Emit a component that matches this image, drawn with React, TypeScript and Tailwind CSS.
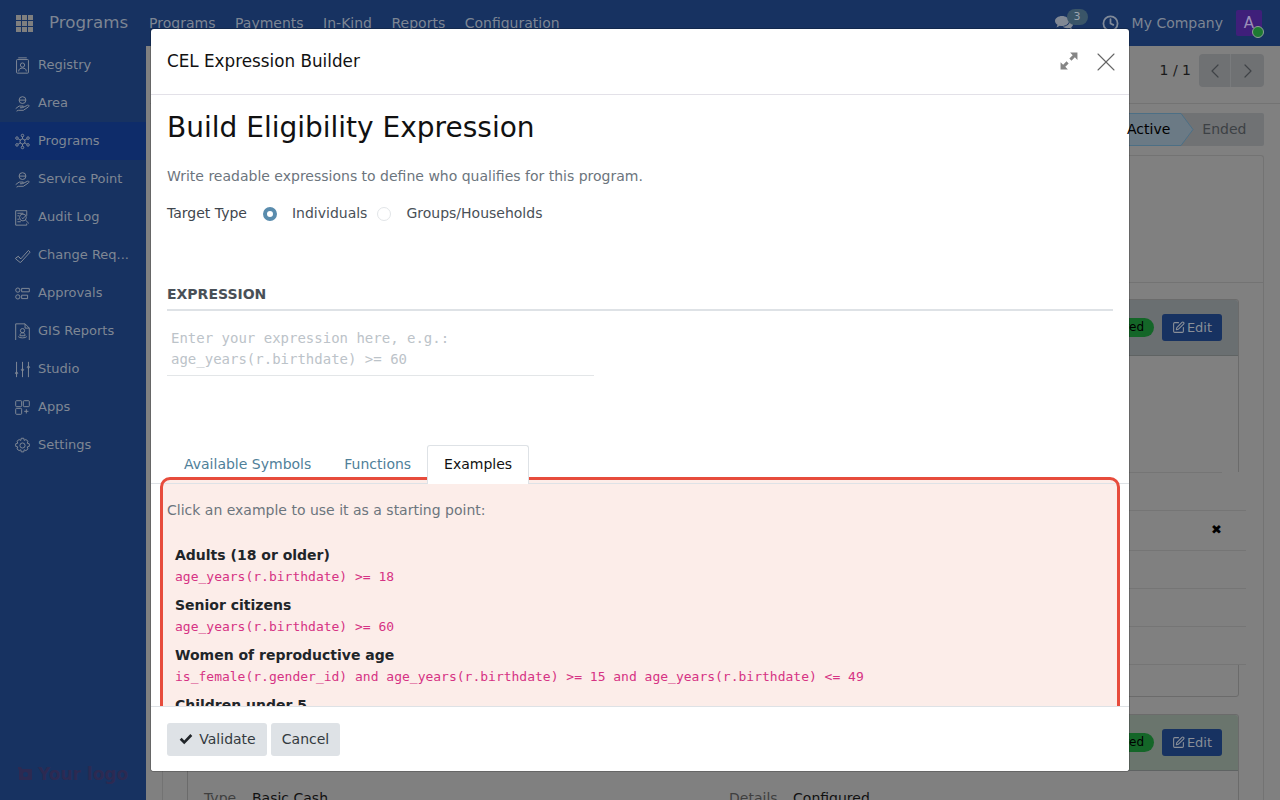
import { ChevronLeft, ChevronRight, Clock, SquarePen, X } from 'lucide-react';

const sans = "font-['DejaVu_Sans',sans-serif]";
const mono = "font-['DejaVu_Sans_Mono',monospace]";

// sidebar icons drawn by hand, the originals are custom line icons
const sideIcons: Record<string, React.ReactNode> = {
  Registry: (
    <>
      <rect x="3" y="3" width="14" height="16" rx="1" />
      <path d="M5 1h10M10 7a2.500 2.500 0 1 1 0 5 2.500 2.500 0 0 1 0-5zM5.500 17c0-3 2-4 4.500-4s4.500 1 4.500 4" />
    </>
  ),
  Area: (
    <>
      <circle cx="10" cy="6" r="4" />
      <path d="M6 6h8M2 16l4-3h5l-1.500 2H7m3 0 6-3c2-.5 2 1 1 2l-6 4H5l-2 1" />
    </>
  ),
  Programs: (
    <>
      <circle cx="10" cy="10" r="3" />
      <circle cx="10" cy="3" r="1.500" />
      <circle cx="10" cy="17" r="1.500" />
      <circle cx="3.500" cy="6" r="1.500" />
      <circle cx="16.500" cy="6" r="1.500" />
      <circle cx="3.500" cy="14" r="1.500" />
      <circle cx="16.500" cy="14" r="1.500" />
      <path d="M10 4.500V7M10 13v2.500M5 7l2.500 1.500M15 7l-2.500 1.500M5 13l2.500-1.500M15 13l-2.500-1.500" />
    </>
  ),
  'Service Point': (
    <>
      <circle cx="10" cy="6" r="4" />
      <path d="M6 6h8M2 16l4-3h5l-1.500 2H7m3 0 6-3c2-.5 2 1 1 2l-6 4H5l-2 1" />
    </>
  ),
  'Audit Log': (
    <>
      <path d="M15 8V2H2v17h13v-2" />
      <circle cx="10.500" cy="10" r="4" />
      <path d="m9 10 1.500 1.500L13 8.500M13.500 13l4 4M4 5h7M4 8h2M4 12h2M4 15h4" />
    </>
  ),
  'Change Req...': <path d="m2 13 3-2 3 3 9-10 2 2L8 18l-1 0-5-4zM5 11l3 3" />,
  Approvals: (
    <>
      <circle cx="4.500" cy="6" r="2.500" />
      <circle cx="4.500" cy="14" r="2.500" />
      <path d="M9 4h9v4H9zM9 12h7v4H9z" />
    </>
  ),
  'GIS Reports': (
    <>
      <path d="M2 1h11l5 5v15H2zM13 1v5h5" />
      <circle cx="10" cy="9" r="2.500" />
      <path d="M7 15c0-2 1-3.500 3-3.500s3 1.500 3 3.500zM5 16c1 2 9 2 10 0" />
    </>
  ),
  Studio: (
    <path d="M3 1v18M10 1v18M17 1v18M3 13a1.300 1.300 0 1 0 .01 0M10 9a1.300 1.300 0 1 0 .01 0M17 6a1.300 1.300 0 1 0 .01 0" />
  ),
  Apps: (
    <>
      <rect x="2" y="2" width="7" height="7" rx="1" />
      <rect x="11" y="2" width="7" height="7" rx="1" />
      <rect x="2" y="11" width="7" height="7" rx="1" />
      <path d="M14.500 12v5M12 14.500h5" />
    </>
  ),
  Settings: (
    <>
      <circle cx="10" cy="10" r="3" />
      <path d="M8.500 1.500h3l.5 2.500 2-1 2.500 2-1 2.300 2.500.700v3l-2.500.700 1 2.300-2.500 2-2-1-.5 2.500h-3l-.5-2.500-2 1-2.500-2 1-2.300-2.500-.700v-3l2.500-.700-1-2.300 2.500-2 2 1z" />
    </>
  ),
};

const sideItems = ['Registry', 'Area', 'Programs', 'Service Point', 'Audit Log', 'Change Req...', 'Approvals', 'GIS Reports', 'Studio', 'Apps', 'Settings'];
const topMenu = ['Programs', 'Payments', 'In-Kind', 'Reports', 'Configuration'];

const examples = [
  { title: 'Adults (18 or older)', code: 'age_years(r.birthdate) >= 18' },
  { title: 'Senior citizens', code: 'age_years(r.birthdate) >= 60' },
  { title: 'Women of reproductive age', code: 'is_female(r.gender_id) and age_years(r.birthdate) >= 15 and age_years(r.birthdate) <= 49' },
  { title: 'Children under 5', code: 'age_years(r.birthdate) < 5' },
];

function Sidebar() {
  return (
    <aside className="w-[146px] shrink-0 bg-[#173261] flex flex-col">
      {sideItems.map((item) => (
        <div key={item} className={`h-[38px] flex items-center pl-[14px] gap-[7px] text-[13px] text-[#7f8794] ${item === 'Programs' ? 'bg-[#0e2c6a]' : ''}`}>
          <svg viewBox="0 0 20 20" fill="none" stroke="#858c98" strokeWidth="1.100" className="w-[17px] h-[17px] shrink-0">
            {sideIcons[item]}
          </svg>
          <span className="whitespace-nowrap">{item}</span>
        </div>
      ))}
      <div className="mt-auto pb-[15px] pl-[17px] flex items-center gap-[5px] text-[#2c2a52] font-bold text-[17px] leading-[22px]">
        <svg viewBox="0 0 16 16" className="w-[16px] h-[16px]" fill="#2c2a52">
          <path d="M1 1h3l1 2h9a1 1 0 0 1 1 1v9a1 1 0 0 1-1 1H3a1 1 0 0 1-1-1V4L1 3zM8.500 6a2.500 2.500 0 1 0 0 5 2.500 2.500 0 0 0 0-5z" />
        </svg>
        <span>Your logo</span>
      </div>
    </aside>
  );
}

function TopBar() {
  return (
    <header className="h-[46px] bg-[#173261] flex items-center text-[#7d8593] shrink-0">
      <div className="ml-[16px] grid grid-cols-3 gap-[1px] w-[17px] h-[17px]">
        {Array.from({ length: 9 }).map((_, i) => (
          <span key={i} className="bg-[#7f7f7f]" />
        ))}
      </div>
      <span className="ml-[16px] text-[16.700px] text-[#7d8593]">Programs</span>
      <nav className="ml-[21px] flex gap-[19.500px] text-[14px]">
        {topMenu.map((m) => (
          <span key={m}>{m}</span>
        ))}
      </nav>
      <div className="ml-auto flex items-center">
        <div className="relative w-[35px] h-[20px] mr-[12px]">
          <svg viewBox="0 0 18 15" className="absolute left-0 top-[3px] w-[18px] h-[15px]" fill="#808894">
            <path d="M7 0c3.800 0 7 2.200 7 5s-3.200 5-7 5c-.8 0-1.500-.1-2.200-.3L1.500 11.500 2.500 8.700C.9 7.800 0 6.500 0 5c0-2.800 3.200-5 7-5z" />
            <path d="M15 4.500c1.800.8 3 2.100 3 3.700 0 1.200-.7 2.300-1.800 3l.8 2.300-2.900-1.500c-.6.2-1.300.2-2 .2-1.800 0-3.400-.6-4.300-1.600 3.800 0 7.200-2.500 7.200-6.100z" />
          </svg>
          <span className="absolute left-[12px] top-[-4px] h-[16px] w-[21px] rounded-full bg-[#3a5568] text-[11px] leading-[16px] text-center text-[#9aa3ad]">3</span>
        </div>
        <Clock size={17} strokeWidth={2.500} className="text-[#808a99] mr-[13px]" />
        <span className="text-[14px] mr-[13px]">My Company</span>
        <div className="relative w-[26px] h-[26px] mr-[18px] rounded-[2px] bg-[#3f1f7a] text-[#9a8fb8] text-[15px] flex items-center justify-center">
          A
          <span className="absolute right-[-2px] bottom-[-2px] w-[12px] h-[12px] rounded-full bg-[#1e7a32] border border-[#8fa098]" />
        </div>
      </div>
    </header>
  );
}

function CardHeader({ bg }: { bg: string }) {
  return (
    <div className={`h-[56px] ${bg} border-b border-[#5f6363] flex items-center justify-end gap-[8px] pr-[16px] rounded-t-[3px]`}>
      <span className="h-[19px] rounded-full bg-[#146628] pl-[20px] pr-[10px] text-[12px] leading-[19px] text-black">Configured</span>
      <span className="w-[60px] h-[27px] rounded-[3px] bg-[#173261] text-[#8a8f98] text-[13px] flex items-center justify-center gap-[2px]">
        <SquarePen size={13} />
        Edit
      </span>
    </div>
  );
}

function Background() {
  return (
    <main className="flex-1 min-w-0 bg-[#808080] border-l-[4px] border-[#808080] overflow-hidden flex flex-col text-[#111]">
      <div className="h-[58px] border-b border-[#737373] flex items-start justify-end pt-[8px] pr-[16px] shrink-0">
        <span className="text-[14px] leading-[33px] mr-[8px] text-[#1a1a1a]">1 / 1</span>
        <div className="flex h-[33px] bg-[#6f7173] rounded-[4px] text-[#3f4347]">
          <span className="w-[32px] flex items-center justify-center border-r border-[#797b7d]"><ChevronLeft size={24} strokeWidth={1.200} /></span>
          <span className="w-[33px] flex items-center justify-center"><ChevronRight size={24} strokeWidth={1.200} /></span>
        </div>
      </div>
      <div className="flex justify-end mt-[9px] pr-[16px] shrink-0">
        <div className="relative h-[33px] w-[137px] bg-[#707274] rounded-r-[2px] text-[14px] flex items-center">
          <span className="absolute left-0 top-0 w-[53px] h-[33px] bg-[#6b7a85] border-y border-[#4c6f85]" />
          <svg viewBox="0 0 14 33" className="absolute left-[53px] top-0 w-[14px] h-[33px]">
            <path d="M0 .5h1L13 16.500 1 32.500H0" fill="#6b7a85" stroke="#4c6f85" />
          </svg>
          <span className="text-black relative z-10">Active</span>
          <span className="ml-[32px] text-[#3d4145]">Ended</span>
        </div>
      </div>
      <div className="relative ml-[12px] mr-[16px] mt-[9px] flex-1 border border-b-0 border-[#737373] rounded-t-[3px] pl-[24px] pr-[24px] pt-[143px]">
        <div className="absolute left-0 right-0 top-[126px] h-[1px] bg-[#737373]" />
        <div className="border border-[#6b6b6b] rounded-[3px]">
          <CardHeader bg="bg-[#6a6f71]" />
          <div className="h-[340px] relative">
            {/* table rows behind the modal */}
            <div className="absolute left-0 right-[-9px] top-[116px] h-[193px] bg-[#808080]" />
            <div className="absolute left-0 right-[16px] top-[116px] h-[1px] bg-[#757575]" />
            <div className="absolute left-0 right-[-8px] top-[154px] h-[1px] bg-[#757575]" />
            <div className="absolute left-0 right-[-8px] top-[194px] h-[1px] bg-[#757575]" />
            <div className="absolute left-0 right-[-8px] top-[232px] h-[1px] bg-[#757575]" />
            <div className="absolute left-0 right-[-8px] top-[270px] h-[1px] bg-[#757575]" />
            <div className="absolute left-0 right-[-8px] top-[308px] h-[1px] bg-[#757575]" />
            <span className="absolute right-[16px] top-[167px] text-[13px] font-bold text-black leading-[14px]">✖</span>
          </div>
        </div>
        <div className="mt-[17px] border border-[#6b6b6b] rounded-t-[3px] h-[200px]">
          <CardHeader bg="bg-[#6a756d]" />
          <div className="pl-[16px] pt-[17px] flex text-[14px] leading-[20px]">
            <span className="w-[48px] text-[#3f3f3f]">Type</span>
            <span className="text-[#111]">Basic Cash</span>
            <span className="ml-[401px] w-[64px] text-[#3f3f3f]">Details</span>
            <span className="text-[#111]">Configured</span>
          </div>
        </div>
      </div>
    </main>
  );
}

function Modal() {
  return (
    <div className={`absolute left-[151px] top-[29px] w-[978px] h-[742px] bg-white rounded-[3px] shadow-[0_0_0_1px_rgba(0,0,0,0.2)] flex flex-col overflow-hidden ${sans}`}>
      <div className="h-[66px] shrink-0 border-b border-[#e3e1e8] flex items-center pl-[16px] pr-[7px]">
        <h2 className="text-[16.800px] text-[#111] mt-[1px]">CEL Expression Builder</h2>
        <svg viewBox="0 0 16 16" className="ml-auto w-[18px] h-[18px] mr-[12px] mt-[-1px]" fill="#858585">
          <path d="M9 0.500h6.500V7l-2.300-2.300-3 3-1.900-1.900 3-3zM7 15.500H.5V9l2.300 2.300 3-3 1.900 1.900-3 3z" />
        </svg>
        <X size={32} strokeWidth={0.800} className="text-[#666] mt-[1px]" />
      </div>

      <div className="flex-1 min-h-0 overflow-hidden relative">
        <div className="px-[16px] pt-[16px]">
          <h1 className="text-[28px] leading-[34px] text-[#111]">Build Eligibility Expression</h1>
          <p className="mt-[21px] text-[14px] leading-[21px] text-[#6c757d]">Write readable expressions to define who qualifies for this program.</p>
          <div className="mt-[16px] flex items-center text-[14px] leading-[21px] text-[#495057]">
            <span className="text-[#3f464d]">Target Type</span>
            <span className="ml-[16px] w-[14px] h-[14px] rounded-full border-[4px] border-[#5a8cad] bg-white" />
            <span className="ml-[15px]">Individuals</span>
            <span className="ml-[10px] w-[14px] h-[14px] rounded-full border border-[#e2e5e8] bg-white" />
            <span className="ml-[15px]">Groups/Households</span>
          </div>
          <div className="mt-[60px] border-b-2 border-[#dee2e6] pb-[4px] text-[14px] leading-[21px] font-bold text-[#495057]">EXPRESSION</div>
          <div className={`mt-[17px] w-[427px] h-[48px] border-b border-[#e3e6e8] pl-[4px] text-[14px] leading-[21px] text-[#bcc3c9] ${mono}`}>
            <div>Enter your expression here, e.g.:</div>
            <div>age_years(r.birthdate) &gt;= 60</div>
          </div>
        </div>

        <div className="absolute left-0 right-0 top-[350px] h-[39px] border-b border-[#dee2e6] flex pl-[16px] text-[14px]">
          <span className="px-[17px] pt-[9px] text-[#4f8099]">Available Symbols</span>
          <span className="px-[16px] pt-[9px] text-[#4f8099]">Functions</span>
          <span className="relative z-20 h-[39px] px-[16px] pt-[8px] bg-white border border-b-0 border-[#dee2e6] rounded-t-[3px] text-[#111]">Examples</span>
        </div>

        <div className="absolute left-[9px] top-[382px] w-[960px] h-[300px] rounded-[10px] border-[3px] border-[#e74c3c] z-10 bg-[#fcede9] pl-[4px] overflow-hidden">
          <div className="border-t border-[#dee2e6] -ml-[4px] h-0 mt-[3px]" />
          <p className="mt-[16px] text-[14px] leading-[21px] text-[#6c757d]">Click an example to use it as a starting point:</p>
          <div className="mt-[24px] pl-[8px]">
            {examples.map((e) => (
              <div key={e.title} className="h-[50px]">
                <div className="text-[14px] leading-[21px] font-bold text-[#212529]">{e.title}</div>
                <code className={`block mt-[1px] text-[13px] leading-[19px] text-[#d63384] ${mono}`}>{e.code}</code>
              </div>
            ))}
          </div>
        </div>
      </div>

      <div className="relative z-20 h-[65px] shrink-0 border-t border-[#dee2e6] bg-white flex items-center pl-[16px] gap-[4px] text-[14px] text-[#343a40]">
        <button className="h-[33px] w-[100px] rounded-[3px] bg-[#dee2e6] flex items-center justify-center gap-[6px] pl-[1px]">
          <svg viewBox="0 0 16 16" className="w-[14px] h-[14px]" fill="#212529">
            <path d="M6 14 .8 8.800 3 6.600l3 3 7-7.200 2.200 2.200z" />
          </svg>
          Validate
        </button>
        <button className="h-[33px] w-[69px] rounded-[3px] bg-[#dee2e6]">Cancel</button>
      </div>
    </div>
  );
}

export default function App() {
  return (
    <div className={`relative w-[1280px] h-[800px] overflow-hidden flex flex-col ${sans}`}>
      <TopBar />
      <div className="flex flex-1 min-h-0">
        <Sidebar />
        <Background />
      </div>
      <Modal />
    </div>
  );
}
